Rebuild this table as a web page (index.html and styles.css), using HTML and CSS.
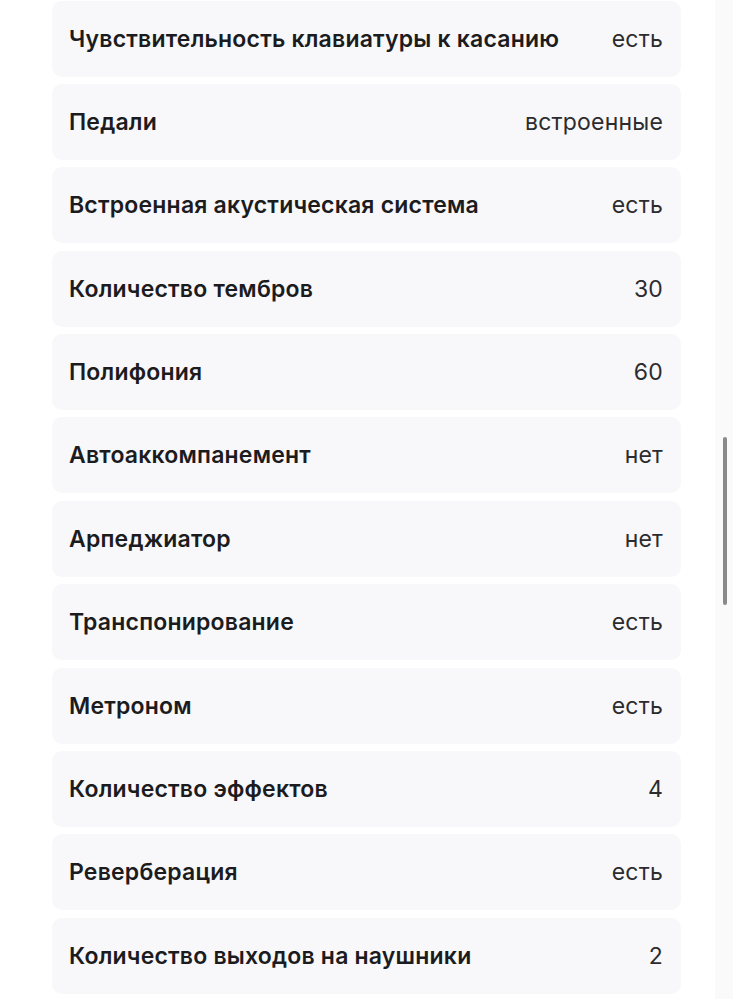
FILE: index.html
```html
<!DOCTYPE html>
<html lang="ru">
<head>
<meta charset="utf-8">
<link rel="stylesheet" href="styles.css">
</head>
<body>
<div class="page">
  <main class="specs">
    <div class="row"><span class="label">Чувствительность клавиатуры к касанию</span><span class="value">есть</span></div>
    <div class="row"><span class="label">Педали</span><span class="value">встроенные</span></div>
    <div class="row"><span class="label">Встроенная акустическая система</span><span class="value">есть</span></div>
    <div class="row"><span class="label">Количество тембров</span><span class="value">30</span></div>
    <div class="row"><span class="label">Полифония</span><span class="value">60</span></div>
    <div class="row"><span class="label">Автоаккомпанемент</span><span class="value">нет</span></div>
    <div class="row"><span class="label">Арпеджиатор</span><span class="value">нет</span></div>
    <div class="row"><span class="label">Транспонирование</span><span class="value">есть</span></div>
    <div class="row"><span class="label">Метроном</span><span class="value">есть</span></div>
    <div class="row"><span class="label">Количество эффектов</span><span class="value">4</span></div>
    <div class="row"><span class="label">Реверберация</span><span class="value">есть</span></div>
    <div class="row"><span class="label">Количество выходов на наушники</span><span class="value">2</span></div>
  </main>
  <div class="track"><div class="thumb"></div></div>
</div>
</body>
</html>
```
FILE: styles.css
```css
html, body {
  margin: 0;
  padding: 0;
  background: #ffffff;
  overflow: hidden;
}
.page {
  display: flex;
  width: 733px;
  height: 999px;
  font-family: Inter, "Noto Sans", sans-serif;
}
.specs {
  width: 629px;
  padding-left: 52px;
  padding-right: 34px;
  display: flex;
  flex-direction: column;
  gap: 7.4px;
  padding-top: 0.5px;
}
.row {
  flex: 0 0 76px;
  display: flex;
  align-items: center;
  justify-content: space-between;
  background: #f8f8fa;
  border-radius: 10px;
  padding: 0 18px 0 17px;
}
.label {
  font-weight: 600;
  font-size: 23px;
  letter-spacing: 0.2px;
  color: #1c1c1e;
}
.value {
  font-weight: 400;
  font-size: 23px;
  letter-spacing: 0.2px;
  color: #2c2c2e;
}
.track {
  width: 18px;
  background: #fafafa;
  display: flex;
  justify-content: center;
}
.thumb {
  width: 4px;
  height: 168px;
  margin-top: 437px;
  margin-left: 2px;
  background: #8a8a8a;
  border-radius: 2px;
}
```
